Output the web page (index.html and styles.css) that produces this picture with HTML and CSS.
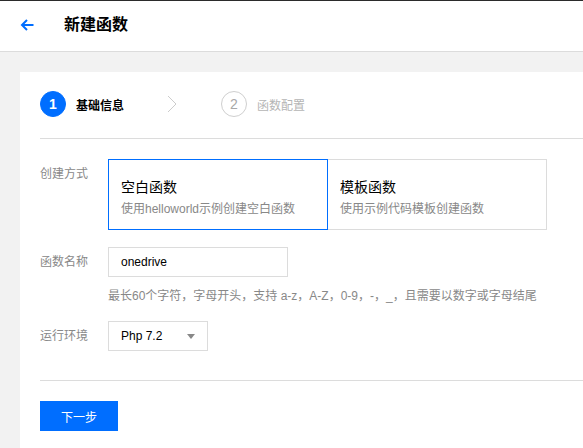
FILE: index.html
```html
<!DOCTYPE html>
<html lang="zh-CN">
<head>
<meta charset="utf-8">
<title>新建函数</title>
<link rel="stylesheet" href="styles.css">
</head>
<body>
<header class="topbar">
  <span class="back">
    <svg width="16" height="16" viewBox="0 0 16 16"><path d="M14.5 8H3M8 3L3 8l5 5" fill="none" stroke="#006eff" stroke-width="2"/></svg>
  </span>
  <h1 class="title">新建函数</h1>
</header>
<main class="main">
  <section class="card">
    <div class="steps">
      <div class="step active"><span class="num">1</span><span class="step-text">基础信息</span></div>
      <svg class="chev" width="10" height="18" viewBox="0 0 10 18"><path d="M1 1l8 8-8 8" fill="none" stroke="#cccccc" stroke-width="1"/></svg>
      <div class="step"><span class="num">2</span><span class="step-text">函数配置</span></div>
    </div>
    <div class="divider"></div>
    <div class="form">
      <div class="row row-type">
        <label class="label">创建方式</label>
        <div class="types">
          <div class="type selected">
            <div class="type-title">空白函数</div>
            <div class="type-desc">使用helloworld示例创建空白函数</div>
          </div>
          <div class="type">
            <div class="type-title">模板函数</div>
            <div class="type-desc">使用示例代码模板创建函数</div>
          </div>
        </div>
      </div>
      <div class="row row-name">
        <label class="label">函数名称</label>
        <div class="field">
          <div class="input">onedrive</div>
          <div class="hint">最长60个字符，字母开头，支持 a-z，A-Z，0-9，-，_，且需要以数字或字母结尾</div>
        </div>
      </div>
      <div class="row row-env">
        <label class="label">运行环境</label>
        <div class="select"><span>Php 7.2</span><span class="caret"></span></div>
      </div>
    </div>
    <div class="divider divider-bottom"></div>
    <div class="actions"><button class="btn">下一步</button></div>
  </section>
</main>
</body>
</html>
```
FILE: styles.css
```css
* { box-sizing: border-box; }
body {
  margin: 0;
  background: #f2f2f2;
  font-family: "Liberation Sans", "Noto Sans CJK SC", sans-serif;
  color: #000;
  height: 448px;
  overflow: hidden;
}
.topbar {
  height: 52px;
  background: #fff;
  border-top: 1px solid #2b2b2b;
  border-bottom: 1px solid #dcdcdc;
  display: flex;
  align-items: center;
  padding-left: 19px;
}
.back { display: flex; width: 16px; height: 16px; margin-top: -2px; }
.title {
  margin: 0 0 0 29px;
  font-size: 16px;
  font-weight: bold;
  line-height: 20px;
  margin-top: -2px;
  color: #000;
}
.main { padding: 20px 0 0 20px; }
.card {
  background: #fff;
  padding: 19px 0 0 20px;
  height: 376px;
}
.steps { display: flex; align-items: center; height: 26px; }
.step { display: flex; align-items: center; }
.num {
  width: 26px; height: 26px; border-radius: 50%;
  border: 1px solid #cfcfcf; color: #a8a8a8;
  display: flex; align-items: center; justify-content: center;
  font-size: 14px;
}
.step-text { margin-left: 10px; font-size: 12px; color: #b5b5b5; }
.step.active .num { background: #006eff; border-color: #006eff; color: #fff; font-weight: bold; }
.step.active .step-text { color: #000; font-weight: bold; }
.chev { margin: 0 44px 0 43px; }
.divider { height: 1px; background: #dcdcdc; margin-top: 21px; }
.form { padding-top: 20px; }
.row { display: grid; grid-template-columns: 68px auto; }
.label { font-size: 12px; color: #888; line-height: 18px; }
.row-type .label { padding-top: 6px; }
.types { display: flex; }
.type {
  width: 220px; height: 71px;
  border: 1px solid #dcdcdc;
  padding: 17px 12px 0 12px;
}
.type + .type { margin-left: -1px; width: 220px; }
.type.selected { border-color: #006eff; position: relative; z-index: 1; }
.type-title { font-size: 14px; line-height: 20px; color: #000; }
.type-desc { font-size: 12px; line-height: 18px; color: #888; margin-top: 3px; }
.row-name { margin-top: 17px; }
.row-name .label, .row-env .label { padding-top: 6px; }
.input {
  width: 180px; height: 30px;
  border: 1px solid #dcdcdc;
  padding-left: 12px;
  font-size: 12px; line-height: 28px; color: #000;
}
.hint { font-size: 12px; color: #888; line-height: 18px; margin-top: 10px; }
.row-env { margin-top: 16px; }
.select {
  width: 100px; height: 30px;
  border: 1px solid #dcdcdc;
  padding: 0 12px;
  display: flex; align-items: center; justify-content: space-between;
  font-size: 12px; color: #000;
}
.caret {
  width: 0; height: 0;
  border-left: 4px solid transparent;
  border-right: 4px solid transparent;
  border-top: 5px solid #888;
}
.divider-bottom { margin-top: 29px; }
.actions { padding-top: 20px; }
.btn {
  width: 78px; height: 30px;
  background: #006eff; color: #fff;
  border: 0; padding: 0;
  font-family: "Liberation Sans", "Noto Sans CJK SC", sans-serif;
  font-size: 12px;
}
```
